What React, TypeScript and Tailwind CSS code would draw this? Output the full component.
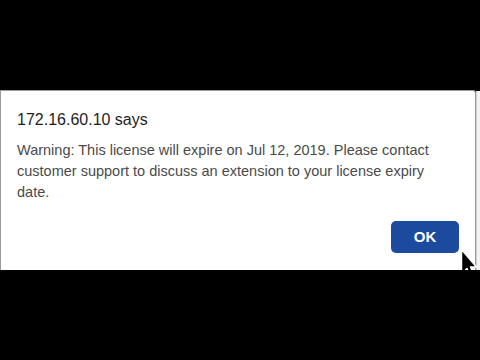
import React from "react";

export default function App() {
  return (
    <div
      className="w-[480px] h-[360px] bg-black flex flex-col overflow-hidden"
      style={{ fontFamily: '"Liberation Sans", Arial, sans-serif' }}
    >
      <div className="h-[90px] shrink-0" />
      <div className="h-[180px] shrink-0 flex relative overflow-hidden">
        <div className="w-[476px] shrink-0 bg-white border-t border-l border-r border-[#9a9a9a] rounded-tr-[3px] flex flex-col pl-[16px] pr-[16px] pt-[19px]">
          <div className="text-[16px] leading-[20px] text-[#1e1e1e]">172.16.60.10 says</div>
          <div className="mt-[10px] text-[14.5px] leading-[21px] text-[#4a4a4a]">
            Warning: This license will expire on Jul 12, 2019. Please contact customer support to discuss an extension to your license expiry date.
          </div>
          <div className="flex justify-end mt-[18px]">
            <button className="w-[68px] h-[32px] rounded-[5px] bg-[#1b4a9f] text-white text-[15px] font-bold flex items-center justify-center">
              OK
            </button>
          </div>
        </div>
        <div className="flex-1 bg-[#f3f3f3] border-l border-[#d0d0d0] mt-[1px]" />
        <svg
          className="absolute left-[458px] top-[157px]"
          width="22"
          height="32"
          viewBox="0 0 22 32"
        >
          <path
            d="M3.5 2.5 L3.5 27 L9 21.5 L12.5 29.5 L16 28 L12.5 20 L18.5 20 Z"
            fill="#000"
            stroke="#fff"
            strokeWidth="1.5"
            strokeLinejoin="round"
          />
        </svg>
      </div>
    </div>
  );
}
